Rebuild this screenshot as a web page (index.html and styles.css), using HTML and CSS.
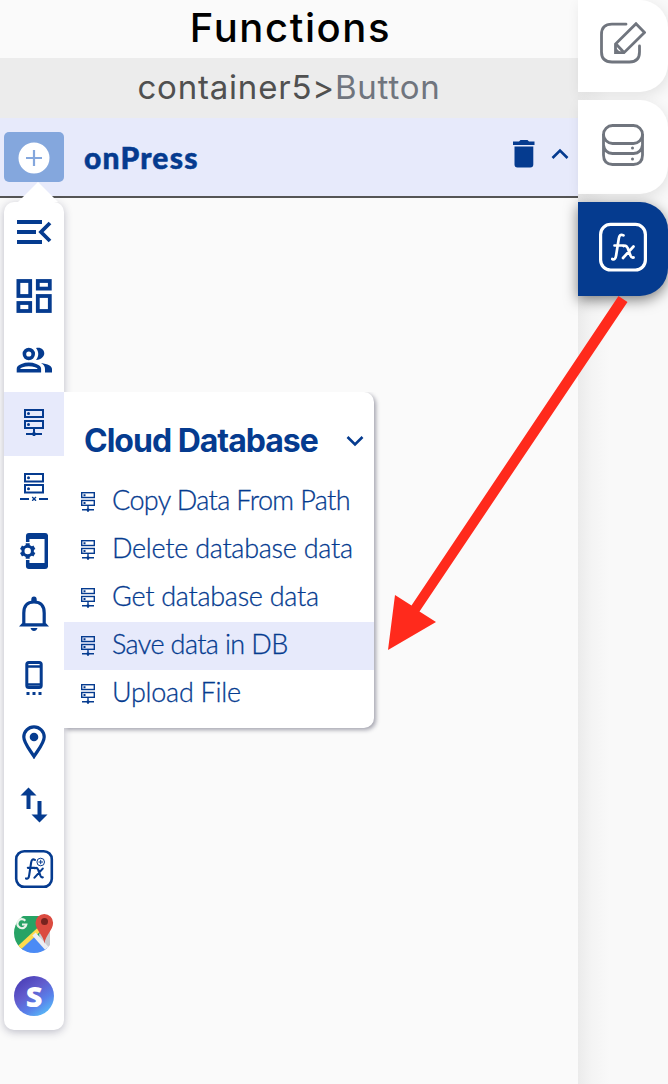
FILE: index.html
```html
<!DOCTYPE html>
<html lang="en">
<head>
<meta charset="utf-8">
<title>Functions</title>
<link rel="stylesheet" href="styles.css">
</head>
<body>
<svg class="defs" width="0" height="0">
  <symbol id="server" viewBox="0 0 20 28"><g fill="none" stroke="currentColor" stroke-width="2"><rect x="1" y="1" width="18" height="7"/><rect x="1" y="12" width="18" height="7"/><path d="M10 19v8M2 25h16"/></g><g fill="currentColor"><circle cx="4.5" cy="4.5" r="1.5"/><circle cx="4.5" cy="15.5" r="1.5"/><circle cx="10" cy="25" r="2"/></g></symbol>
  <symbol id="server-small" viewBox="0 0 14 20"><g fill="none" stroke="currentColor" stroke-width="1.4"><rect x=".7" y=".7" width="12.6" height="4.8"/><rect x=".7" y="8.5" width="12.6" height="4.8"/><path d="M7 13v7M1 17.8h12"/></g><path fill="currentColor" d="M2.5 2.2h2v2h-2zM2.5 10h2v2h-2zM5.8 16.6h2.4V19H5.8z"/></symbol>
  <symbol id="fx" viewBox="0 0 24 28"><g fill="none" stroke="currentColor" stroke-width="2.7" stroke-linecap="round"><path d="M12.500 2.400C9.500.8 8.200 2.500 7.700 6L5.200 22c-.5 4-2 5-4 4M3.500 12.500H12"/><path d="M12.500 13c2-1 3.200 0 4.200 2l2.800 7.500c.8 2 1.500 2.500 3 2M22.500 13.500L12 25"/></g></symbol>
</svg>
<main class="app">
  <section class="panel">
    <h1 class="title"><span>Functions</span></h1>
    <div class="crumb"><span>container5&gt;<em>Button</em></span></div>
    <header class="event">
      <button class="add"><svg width="32" height="32" viewBox="0 0 32 32"><circle cx="16" cy="16" r="15.500" fill="#fff"/><path d="M8 16h16M16 8v16" stroke="#84a7dd" stroke-width="2.200"/></svg></button>
      <strong class="event-name">onPress</strong>
      <svg class="trash" width="22" height="28" viewBox="0 0 22 28"><path fill="currentColor" d="M0 1.500h6L7.500 0h7L16 1.500h5.500v3.500H0zM1.500 6.500h18.800V24.500q0 3-3 3H4.500q-3 0-3-3z"/></svg>
      <svg class="chev" width="18" height="12" viewBox="0 0 18 12"><path d="M1.500 10L9 2.500l7.500 7.500" fill="none" stroke="currentColor" stroke-width="2.600"/></svg>
    </header>
    <div class="workspace">
      <nav class="tools">
        <a class="tool"><svg width="36" height="24" viewBox="0 0 36 24"><path d="M1 2h25M1 12h19M1 22h25M34 3l-9 9 9 9" fill="none" stroke="currentColor" stroke-width="3.800"/></svg></a>
        <a class="tool"><svg width="36" height="34" viewBox="0 0 36 34"><g fill="none" stroke="currentColor" stroke-width="3.800"><rect x="2.400" y="2" width="11.800" height="15"/><rect x="21.800" y="2" width="12" height="7.600"/><rect x="2.400" y="24" width="11.800" height="8"/><rect x="21.800" y="17" width="12" height="15"/></g></svg></a>
        <a class="tool"><svg width="36" height="26" viewBox="0 0 36 26"><g fill="none" stroke="currentColor" stroke-width="3.600"><circle cx="12.800" cy="7" r="4.400"/><path d="M2.500 23.700v-2c0-2.600 6-4.300 10.300-4.300s10.500 1.700 10.500 4.300v2z"/></g><path fill="currentColor" d="M20 1c10-2 12 11 0 12 3-4 3-8 0-12zM25 16c7 1 11 3 11 6v3.500h-7V22q0-4-4-6z"/></svg></a>
        <a class="tool active"><svg width="20" height="28"><use href="#server"/></svg></a>
        <a class="tool"><svg width="28" height="28" viewBox="0 0 28 28"><g fill="none" stroke="currentColor" stroke-width="2"><rect x="5" y="1" width="18" height="7.500"/><rect x="5" y="12" width="18" height="7.500"/><path d="M0 26h9M19 26h9"/><path d="M12.200 24l3.800 3.800M16 24l-3.800 3.800" stroke-width="1.300"/></g><circle cx="8.500" cy="4.700" r="1.500" fill="currentColor"/><circle cx="8.500" cy="15.700" r="1.500" fill="currentColor"/></svg></a>
        <a class="tool"><svg width="28" height="36" viewBox="0 0 28 36"><path d="M7.700 9V3q0-1.200 1.200-1.200h16.200q1.200 0 1.200 1.200v30q0 1.200-1.200 1.200H8.900q-1.200 0-1.200-1.200v-6" fill="none" stroke="currentColor" stroke-width="3.500"/><path d="M8 4.500h17M8 31.500h17" stroke="currentColor" stroke-width="3"/><circle cx="7.700" cy="18" r="4.700" fill="none" stroke="currentColor" stroke-width="3"/><path d="M7.700 10.300v3M7.700 22.700v3M1 14.200l2.600 1.500M11.800 20.300l2.600 1.500M1 21.800l2.600-1.500M11.800 15.700l2.600-1.500" stroke="currentColor" stroke-width="4"/></svg></a>
        <a class="tool"><svg width="30" height="36" viewBox="0 0 30 36"><path d="M4.800 29V17q0-11 10.200-11t10.200 11v12" fill="none" stroke="currentColor" stroke-width="3.200"/><path fill="currentColor" d="M0 30.500l3-3.200h24l3 3.200zM12.300 6V3.500q0-3 2.700-3t2.700 3V6zM11.500 32h7q-1 3-3.500 3t-3.500-3z"/></svg></a>
        <a class="tool"><svg width="18" height="34" viewBox="0 0 18 34"><rect x="1.800" y="1.600" width="14.400" height="25" rx="2" fill="none" stroke="currentColor" stroke-width="3"/><path d="M2 5.500h14M2 23.500h14" stroke="currentColor" stroke-width="2.600"/><path fill="currentColor" d="M1.500 31h3v3h-3zM7.500 31h3v3h-3zM13.500 31h3v3h-3z"/></svg></a>
        <a class="tool"><svg width="24" height="34" viewBox="0 0 24 34"><path d="M12 31.500C8 25 1.800 18 1.800 12a10.200 10.200 0 0 1 20.400 0C22.200 18 16 25 12 31.500z" fill="none" stroke="currentColor" stroke-width="3.200"/><circle cx="12" cy="12" r="4.300" fill="currentColor"/></svg></a>
        <a class="tool"><svg width="28" height="36" viewBox="0 0 28 36"><path fill="currentColor" d="M8.500.5l8 8h-6v13.500h-4V8.500h-6zM19.500 35.500l-8-8h6V14h4v13.500h6z"/></svg></a>
        <a class="tool"><svg width="40" height="40" viewBox="0 0 40 40"><rect x="2.200" y="2.200" width="35.600" height="35.600" rx="8" fill="none" stroke="currentColor" stroke-width="2.600"/><use href="#fx" x="11" y="9" width="19" height="22"/><circle cx="26.700" cy="13" r="3.800" fill="#fff" stroke="currentColor"/><path d="M24.500 13H29M26.700 10.800v4.400" stroke="currentColor" stroke-width="1"/></svg></a>
        <a class="tool"><svg width="40" height="40" viewBox="0 0 40 40"><clipPath id="disc"><circle cx="20" cy="20" r="20"/></clipPath><g clip-path="url(#disc)"><path fill="#27a365" d="M0 3h31v34H0z"/><path fill="#c9cbd0" d="M25 21L36 12v22L28 39z"/><path fill="#4b8bf5" d="M4 39l17-18 16 17v5H4z"/><path d="M4 36L30 12" stroke="#fedb4d" stroke-width="4.500"/><path d="M20 21l16 18" stroke="#eceef2" stroke-width="4.500"/></g><path fill="#db4b40" d="M30.500 30.500C29.500 22 21.500 17 21.500 9.700a8.800 8.800 0 0 1 17.600 0C39 17 31.500 22 30.500 30.500z"/><circle cx="30.500" cy="8.500" r="3.500" fill="#77231f"/><path d="M11.300 7.800A4.500 4.500 0 1 0 12.300 11.500H8" fill="none" stroke="#e8f3e9" stroke-width="2.200"/></svg></a>
        <a class="tool"><span class="s-logo">S</span></a>
      </nav>
      <aside class="submenu">
        <h2 class="sub-head"><span>Cloud Database</span><svg class="chev" width="18" height="12" viewBox="0 0 18 12"><path d="M1.500 2L9 9.500 16.500 2" fill="none" stroke="currentColor" stroke-width="2.600"/></svg></h2>
        <ul>
          <li><svg width="14" height="20"><use href="#server-small"/></svg><span class="tighter">Copy Data From Path</span></li>
          <li><svg width="14" height="20"><use href="#server-small"/></svg><span>Delete database data</span></li>
          <li><svg width="14" height="20"><use href="#server-small"/></svg><span>Get database data</span></li>
          <li class="active"><svg width="14" height="20"><use href="#server-small"/></svg><span class="tighter">Save data in DB</span></li>
          <li><svg width="14" height="20"><use href="#server-small"/></svg><span>Upload File</span></li>
        </ul>
      </aside>
    </div>
  </section>
  <nav class="tabs">
    <a class="tab first"><svg width="46" height="42" viewBox="0 0 46 42"><g fill="none" stroke="currentColor" stroke-width="2.800"><path d="M26 2.200H12Q1.500 2.200 1.500 12.500V30Q1.500 40 12 40H29.500Q39.500 40 39.500 30V24" stroke-linecap="round"/><path d="M15.500 30.700V22L36 1.700l8.500 8.700L24 30.700z"/><path d="M16.500 22.500l7 7.500"/></g><path fill="currentColor" d="M16 26l5 5h-5z"/></svg></a>
    <a class="tab second"><svg width="42" height="42" viewBox="0 0 42 42"><g fill="none" stroke="currentColor" stroke-width="2.800"><rect x="1.500" y="1.500" width="39" height="18" rx="9"/><path d="M1.500 10v21q0 9 9 9.500h21q9-.5 9-9.500V10M1.500 21q1 8 9 8.500h21q8-.5 9-8.500"/></g><circle cx="30.500" cy="24" r="1.500" fill="currentColor"/><circle cx="30.500" cy="35" r="1.500" fill="currentColor"/></svg></a>
    <a class="tab current"><svg width="48" height="50" viewBox="0 0 48 50"><rect x="1.600" y="2.400" width="44.800" height="45.600" rx="10" fill="none" stroke="currentColor" stroke-width="3.200"/><use href="#fx" x="12" y="11" width="24" height="28"/></svg></a>
  </nav>
  <svg class="arrow" width="240" height="356" viewBox="0 0 240 356"><path fill="#ff2a1c" d="M230.500 0L239.500 6 31.500 315.500 48 326 0 354 7 299 23.500 309.500z"/></svg>
</main>
</body>
</html>
```
FILE: styles.css
```css
* { box-sizing: border-box; }
body { margin: 0; background: #fafafa; color: #053b8f; }
.defs { position: absolute; }
svg { display: block; flex: none; }
.app { position: relative; display: grid; grid-template-columns: 578px 90px; height: 1084px; overflow: hidden; }
.panel { display: flex; flex-direction: column; background: #fafafa; }
.title { margin: 0; height: 58px; display: flex; justify-content: center; font: 500 40px/56px Inter, sans-serif; color: #000; letter-spacing: 1.6px; padding-left: 3px; }
.crumb { height: 60px; background: #ececec; text-align: center; font: 400 33px/58px Inter, sans-serif; letter-spacing: .8px; color: #505050; white-space: nowrap; }
.crumb em { font-style: normal; color: #70757e; }
.event { height: 80px; background: #e7eafb; border-bottom: 2px solid #555; display: flex; align-items: center; padding: 0 9px 0 4px; }
.add { width: 60px; height: 50px; border: 0; border-radius: 5px; background: #84a7dd; display: grid; place-items: center; padding: 2px 0 0; }
.event-name { margin-left: 20px; font: 900 30px/40px Lato, sans-serif; letter-spacing: 1.2px; -webkit-text-stroke: .5px currentColor; flex: 1; }
.trash { margin: 0 16px 6px 0; }
.event .chev { margin-bottom: 6px; }
.workspace { display: flex; align-items: flex-start; flex: 1; padding: 4px 0 0 4px; }
.tools { position: relative; width: 60px; height: 828px; background: #fff; border-radius: 10px; display: flex; flex-direction: column; box-shadow: 0 2px 8px rgba(30, 30, 70, .28); }
.tools::before { content: ""; position: absolute; left: 14px; top: -20px; border: solid transparent; border-width: 0 20px 20px; border-bottom-color: #fff; }
.tool { height: 63.67px; flex: none; display: grid; place-items: center; padding-bottom: 1px; }
.tool:first-child { margin-top: -1px; }
.tool.active { background: #e7eafb; }
.s-logo { width: 40px; height: 40px; border-radius: 50%; background: linear-gradient(145deg, #4639b3 5%, #625ccd 40%, #597fe9 65%, #58c8fb 95%); color: #fff; font: 900 29px/40px "Noto Sans", sans-serif; text-align: center; }
.submenu { position: relative; width: 310px; height: 336px; margin-top: 190px; background: #fff; border-radius: 0 10px 10px 0; box-shadow: 2px 2px 4px rgba(20, 20, 50, .38); clip-path: inset(0 -10px -10px 0); }
.sub-head { margin: 0; height: 86px; padding: 12px 10px 0 20px; display: flex; align-items: center; justify-content: space-between; font: 700 32px/40px Inter, sans-serif; letter-spacing: -1px; white-space: nowrap; }
.submenu ul { margin: 0; padding: 0; list-style: none; }
.submenu li { height: 48px; display: flex; align-items: center; gap: 17px; padding-left: 17px; font: 300 27px/44px Lato, sans-serif; letter-spacing: -.27px; -webkit-text-stroke: .3px currentColor; white-space: nowrap; }
.submenu li span { padding-bottom: 4px; }
.submenu li .tighter { letter-spacing: -.62px; }
.submenu li.active { background: #e7eafb; }
.tabs { display: flex; flex-direction: column; gap: 8px; background: linear-gradient(90deg, #ebebeb, #f4f4f4 14px, #f9f9f9 32px); }
.tab { height: 94px; display: flex; align-items: center; padding-left: 22px; background: #fff; border-radius: 0 28px 28px 0; color: #70757e; box-shadow: 2px 4px 14px rgba(0, 0, 0, .09); }
.tab.first { height: 92px; padding-bottom: 6px; }
.tab.second { padding: 0 0 4px 24px; }
.tab.current { background: #053b8f; color: #fff; padding: 0 0 4px 21px; box-shadow: 0 4px 14px rgba(0, 0, 0, .5); }
.arrow { position: absolute; left: 388px; top: 296px; }
```
